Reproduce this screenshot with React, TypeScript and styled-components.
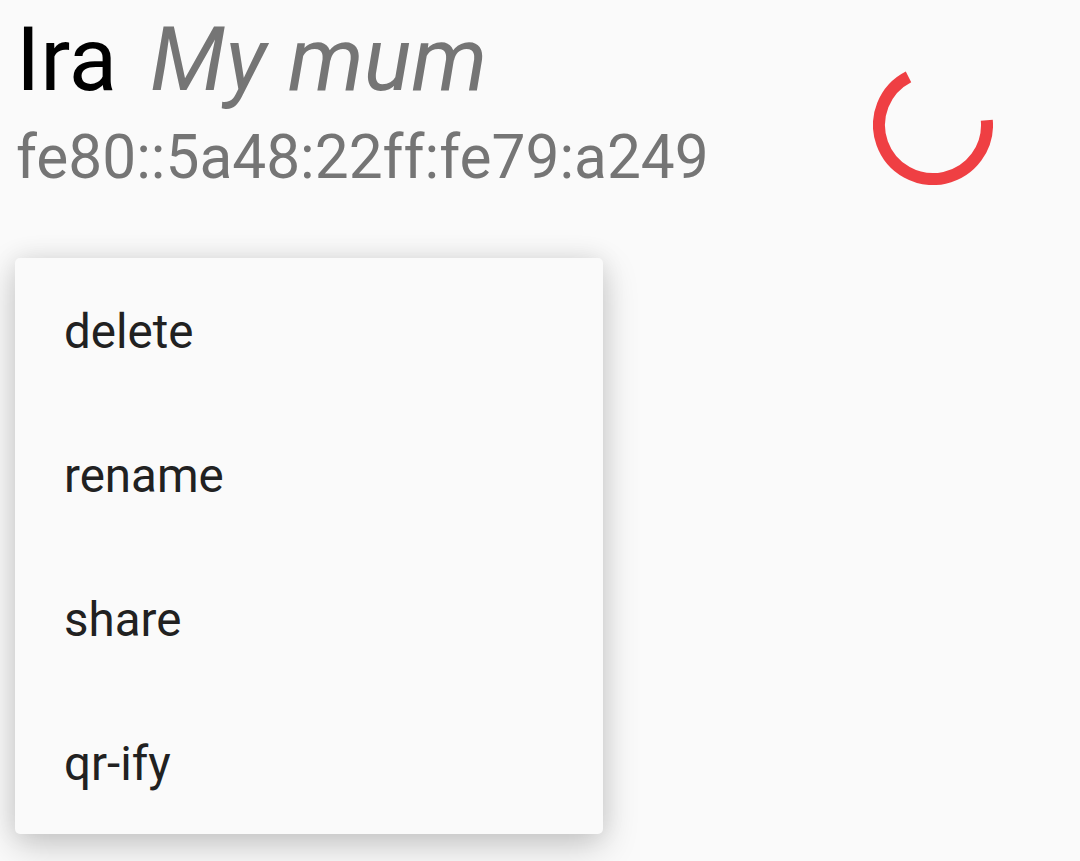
import styled, { createGlobalStyle } from "styled-components";

const GlobalStyle = createGlobalStyle`
    html, body {
        margin: 0;
        padding: 0;
        background: #fafafa;
        font-family: Roboto, "Noto Sans", sans-serif;
    }
`;

const Screen = styled.div`
    width: 1080px;
    height: 861px;
    overflow: hidden;
    background: #fafafa;
`;

const Header = styled.div`
    display: flex;
    align-items: flex-start;
    padding: 8px 87px 0 16px;
`;

const Info = styled.div`
    display: flex;
    flex-direction: column;
`;

const TitleLine = styled.div`
    font-size: 89px;
    line-height: 104px;
    white-space: nowrap;
`;

const Name = styled.span`
    color: #000000;
`;

const Nick = styled.span`
    color: #757575;
    font-style: italic;
    margin-left: 33px;
`;

const Address = styled.div`
    margin-top: 10px;
    font-size: 60.4px;
    line-height: 71px;
    color: #757575;
    white-space: nowrap;
`;

const Spinner = styled.svg`
    margin-left: auto;
    margin-top: 57px;
    flex-shrink: 0;
`;

const Menu = styled.ul`
    list-style: none;
    margin: 65px 0 0 15px;
    padding: 0;
    width: 588px;
    background: #fafafa;
    border-radius: 5px;
    box-shadow: 0 12px 36px rgba(0, 0, 0, 0.2), 0 0 24px rgba(0, 0, 0, 0.08);
`;

const MenuItem = styled.li`
    height: 144px;
    box-sizing: border-box;
    display: flex;
    align-items: center;
    padding: 4px 0 0 49px;
    font-size: 47.5px;
    color: #212121;
`;

const items = ["delete", "rename", "share", "qr-ify"];

function App() {
    return (
        <Screen>
            <GlobalStyle />
            <Header>
                <Info>
                    <TitleLine>
                        <Name>Ira</Name>
                        <Nick>My mum</Nick>
                    </TitleLine>
                    <Address>fe80::5a48:22ff:fe79:a249</Address>
                </Info>
                <Spinner width="120" height="120" viewBox="0 0 120 120">
                    <path
                        d="M 113.8 55.3 A 54 54 0 1 1 35.5 11.9"
                        fill="none"
                        stroke="#ef3f43"
                        strokeWidth="12"
                    />
                </Spinner>
            </Header>
            <Menu>
                {items.map((item) => (
                    <MenuItem key={item}>{item}</MenuItem>
                ))}
            </Menu>
        </Screen>
    );
}

export default App;
